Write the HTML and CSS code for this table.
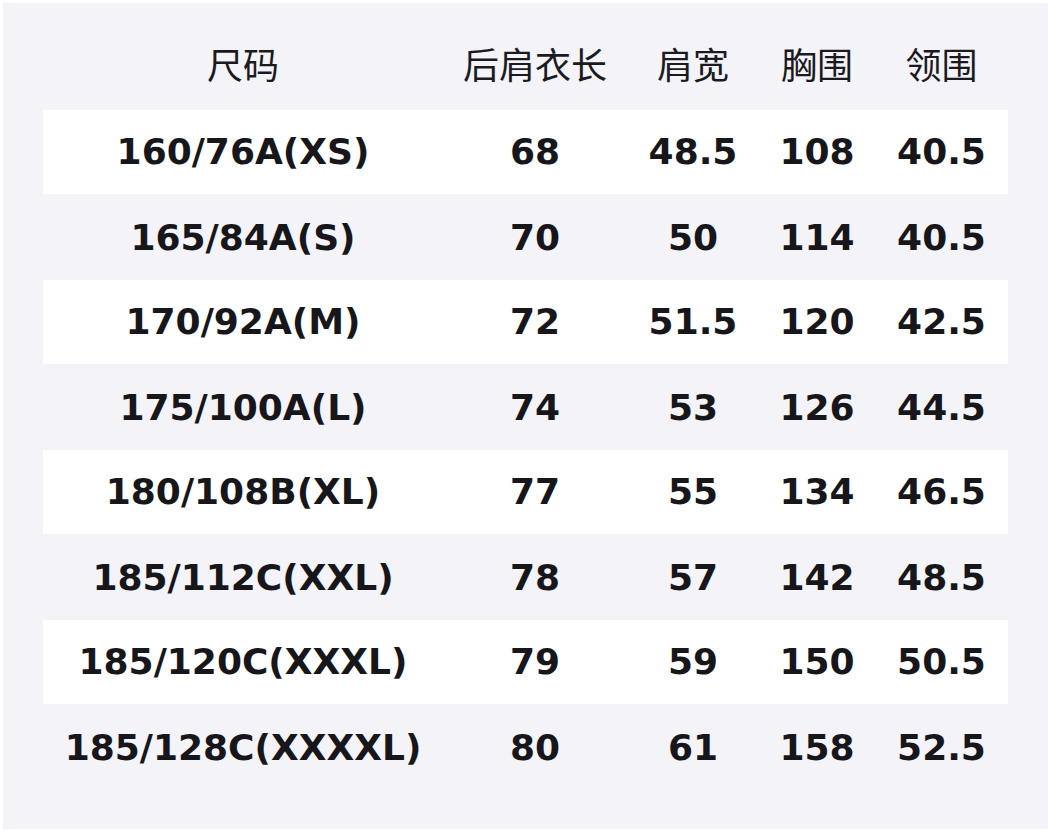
FILE: index.html
```html
<!DOCTYPE html>
<html lang="zh">
<head>
<meta charset="utf-8">
<title>尺码表</title>
<link rel="stylesheet" href="styles.css">
</head>
<body>
<div class="card">
  <div class="row head">
    <div>尺码</div><div>后肩衣长</div><div>肩宽</div><div>胸围</div><div>领围</div>
  </div>
  <div class="row alt"><div>160/76A(XS)</div><div>68</div><div>48.5</div><div>108</div><div>40.5</div></div>
  <div class="row"><div>165/84A(S)</div><div>70</div><div>50</div><div>114</div><div>40.5</div></div>
  <div class="row alt"><div>170/92A(M)</div><div>72</div><div>51.5</div><div>120</div><div>42.5</div></div>
  <div class="row"><div>175/100A(L)</div><div>74</div><div>53</div><div>126</div><div>44.5</div></div>
  <div class="row alt"><div>180/108B(XL)</div><div>77</div><div>55</div><div>134</div><div>46.5</div></div>
  <div class="row"><div>185/112C(XXL)</div><div>78</div><div>57</div><div>142</div><div>48.5</div></div>
  <div class="row alt"><div>185/120C(XXXL)</div><div>79</div><div>59</div><div>150</div><div>50.5</div></div>
  <div class="row"><div>185/128C(XXXXL)</div><div>80</div><div>61</div><div>158</div><div>52.5</div></div>
</div>
</body>
</html>
```
FILE: styles.css
```css
html, body {
  margin: 0;
  padding: 0;
  background: #ffffff;
}
body {
  padding: 3px;
}
.card {
  width: 1045px;
  height: 826px;
  box-sizing: border-box;
  padding: 22px 40px 39px 40px;
  background: #f3f3f8;
}
.row {
  display: grid;
  grid-template-columns: 400px 184px 132px 116px 133px;
  height: 85px;
  box-sizing: border-box;
  align-items: center;
  text-align: center;
  color: #16161b;
  font-family: "DejaVu Sans", "Noto Sans CJK SC", sans-serif;
  font-weight: bold;
  font-size: 36px;
  line-height: 1;
}
.row.alt {
  background: #ffffff;
  height: 84px;
  margin-bottom: 1px;
}
.row.head {
  font-family: "Noto Sans CJK SC", "DejaVu Sans", sans-serif;
  font-weight: normal;
  color: #1a1a1f;
  padding-bottom: 10px;
}
```
